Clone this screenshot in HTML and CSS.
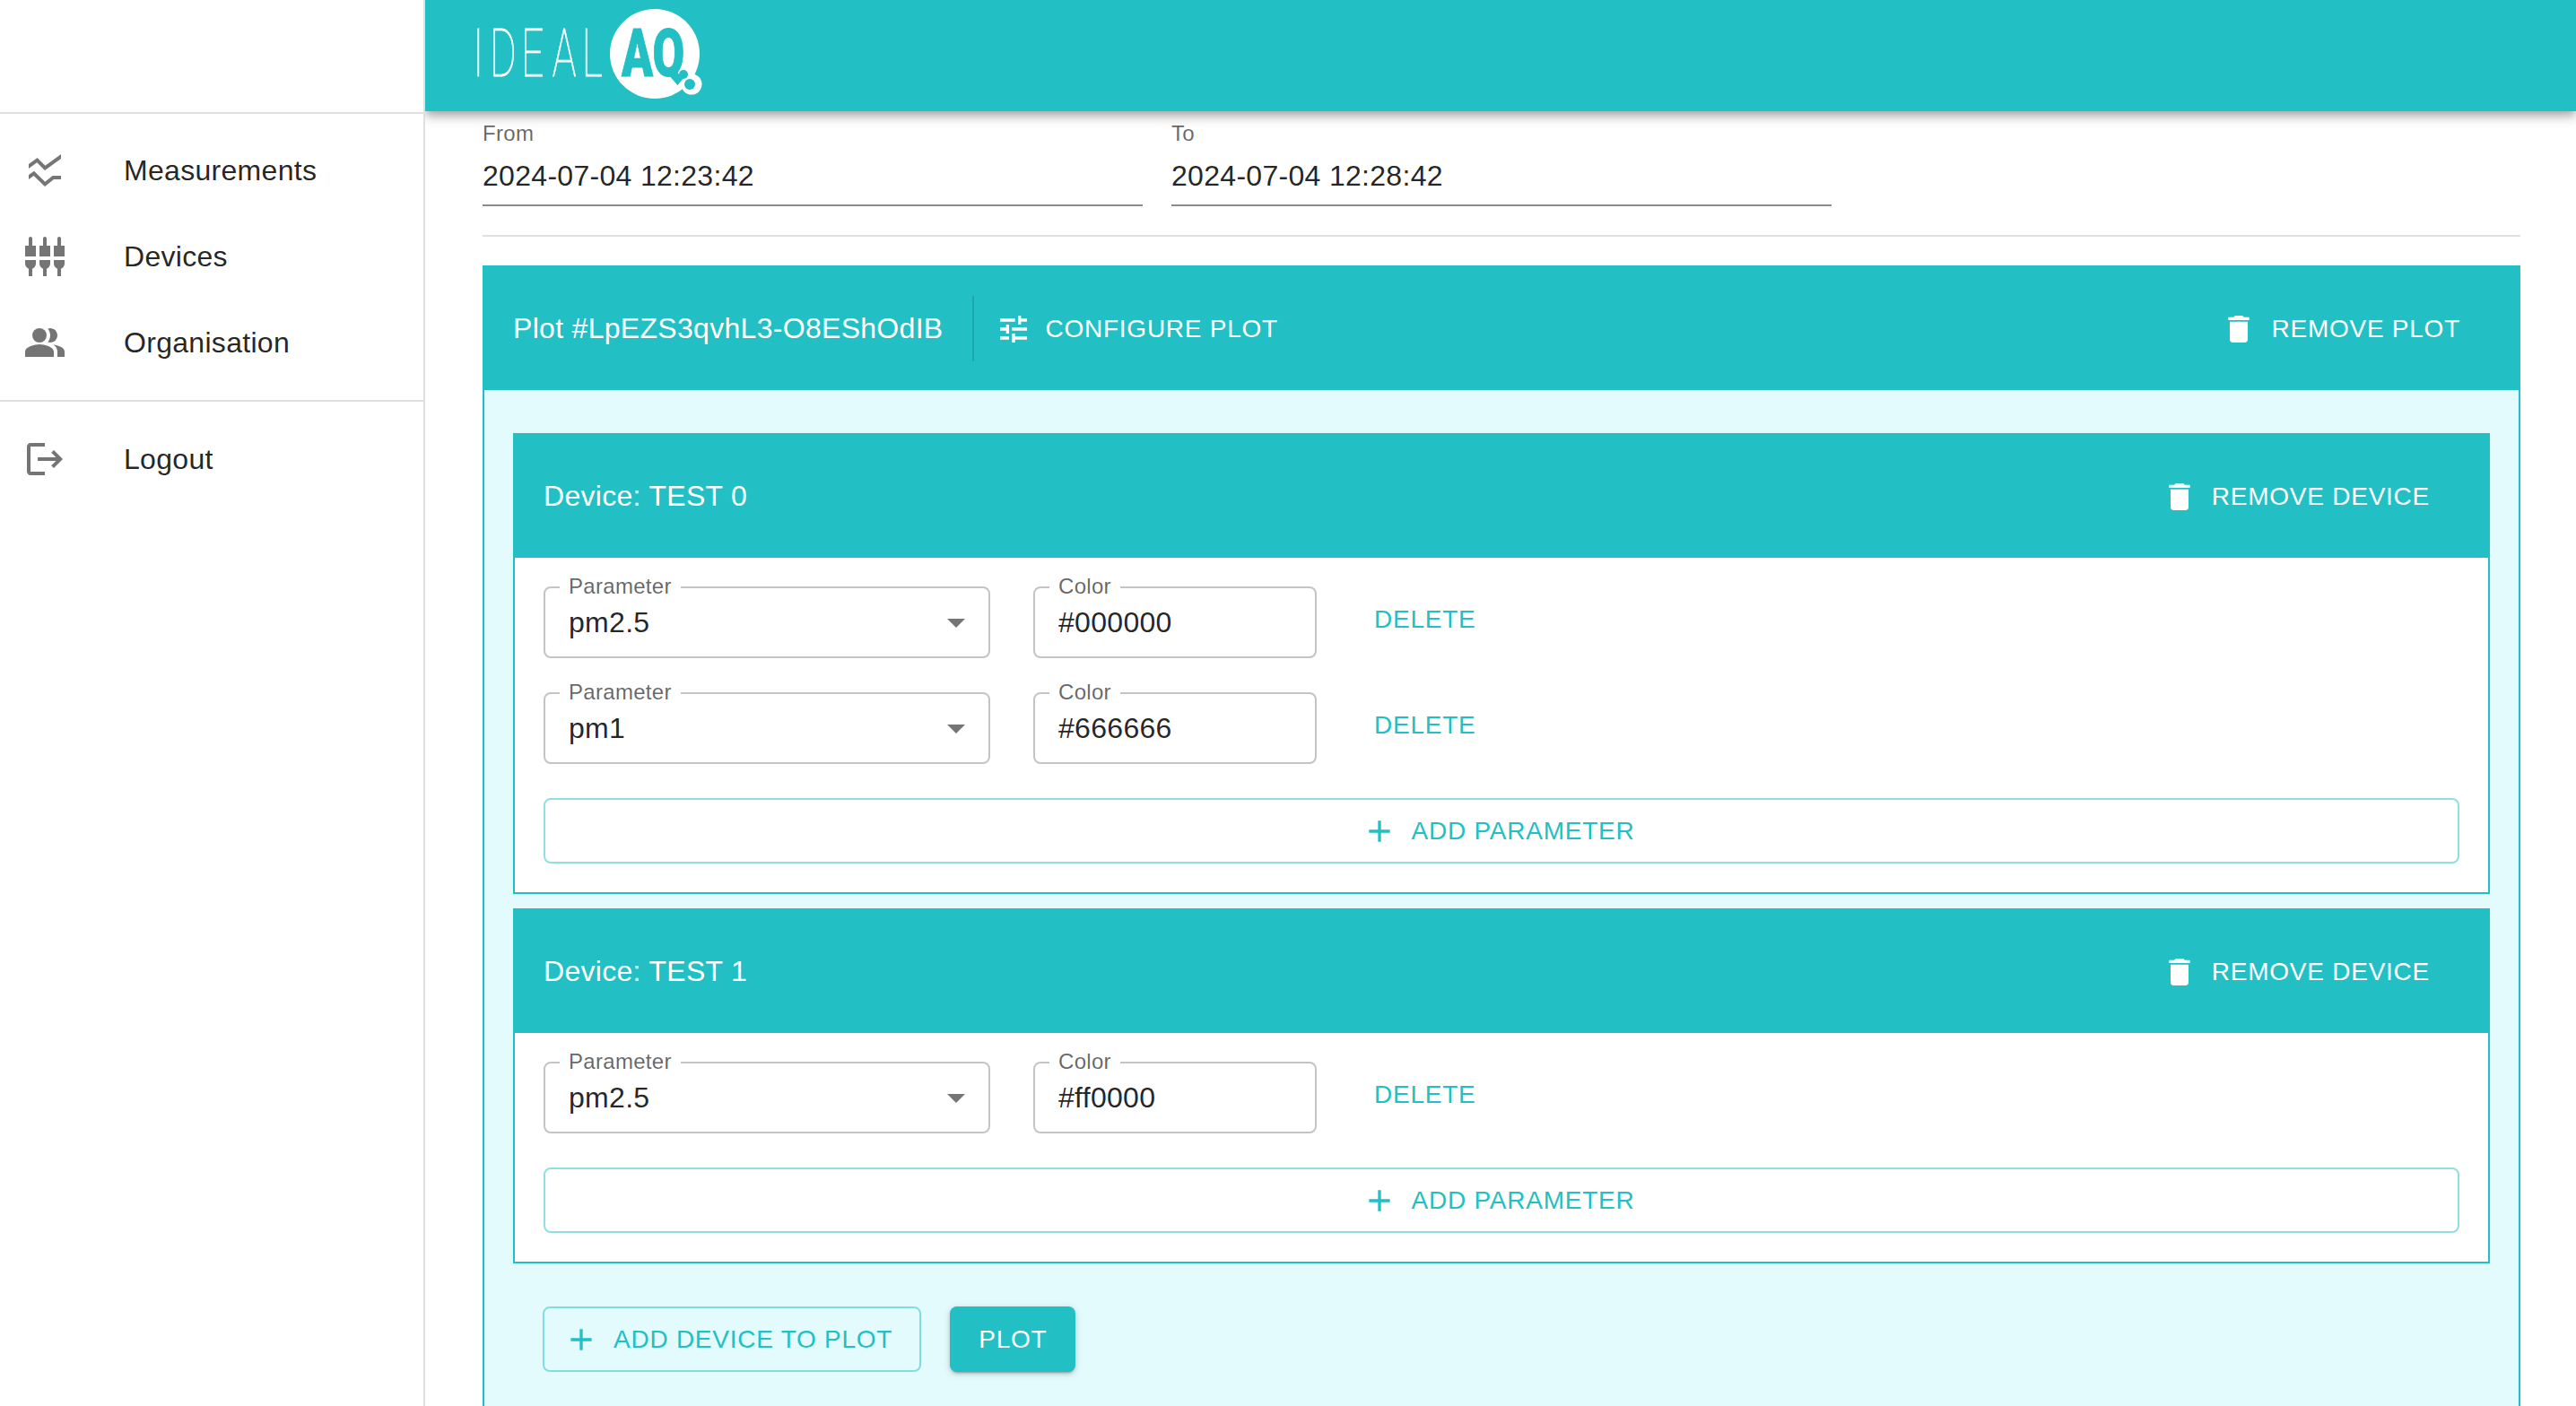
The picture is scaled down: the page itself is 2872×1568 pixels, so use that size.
FILE: index.html
```html
<!DOCTYPE html>
<html>
<head>
  <title>IdealAQ Measurements</title>
  <link rel="stylesheet" href="styles.css">
</head>
<body>
  <div class="app">
    <nav class="sidebar">
      <div class="sidebar-top"></div>
      <ul class="nav-list">
        <li class="nav-item">
          <svg class="nav-icon" viewBox="0 0 24 24"><path d="M21 5.47 12 12 7.62 7.62 3 11V8.52L7.83 5l4.38 4.38L21 3v2.47zM21 15h-4.7l-4.17 3.34L6 12.41l-3 2.13v2.46l2.8-2 6.2 6 5-4h4v-2z"/></svg>
          <span>Measurements</span>
        </li>
        <li class="nav-item">
          <svg class="nav-icon" viewBox="0 0 24 24"><path d="M5 2c0-.55-.45-1-1-1s-1 .45-1 1v4H1v6h6V6H5V2zm4 14c0 1.3.84 2.4 2 2.82V23h2v-4.18c1.16-.41 2-1.51 2-2.82v-2H9v2zm-8 0c0 1.3.84 2.4 2 2.82V23h2v-4.18C6.16 18.4 7 17.3 7 16v-2H1v2zM21 6V2c0-.55-.45-1-1-1s-1 .45-1 1v4h-2v6h6V6h-2zm-8-4c0-.55-.45-1-1-1s-1 .45-1 1v4H9v6h6V6h-2V2zm4 14c0 1.3.84 2.4 2 2.82V23h2v-4.18c1.16-.41 2-1.51 2-2.82v-2h-6v2z"/></svg>
          <span>Devices</span>
        </li>
        <li class="nav-item">
          <svg class="nav-icon" viewBox="0 0 24 24"><path d="M16.67 13.13C18.04 14.06 19 15.32 19 17v3h4v-3c0-2.18-3.57-3.47-6.33-3.87z"/><circle cx="9" cy="8" r="4"/><path d="M15 12c2.21 0 4-1.79 4-4s-1.79-4-4-4c-.47 0-.91.1-1.33.24C14.5 5.27 15 6.58 15 8s-.5 2.73-1.33 3.76c.42.14.86.24 1.33.24zM9 13c-2.67 0-8 1.34-8 4v3h16v-3c0-2.66-5.33-4-8-4z"/></svg>
          <span>Organisation</span>
        </li>
      </ul>
      <ul class="nav-list nav-list-last">
        <li class="nav-item">
          <svg class="nav-icon" viewBox="0 0 24 24"><path d="m17 7-1.41 1.41L18.17 11H8v2h10.17l-2.58 2.58L17 17l5-5zM4 5h8V3H4c-1.1 0-2 .9-2 2v14c0 1.1.9 2 2 2h8v-2H4V5z"/></svg>
          <span>Logout</span>
        </li>
      </ul>
    </nav>

    <div class="main">
      <header class="appbar">
        <svg class="logo" viewBox="0 0 180 124" width="180" height="124">
          <text class="logo-ideal" transform="scale(.6 1)" x="-4 27 85 143 198" y="85">IDEAL</text>
          <circle cx="200" cy="60" r="50" fill="#fff"/>
          <circle cx="241" cy="94" r="11.5" fill="#fff"/>
          <circle cx="239" cy="94" r="6" fill="#22bfc4"/>
          <text class="logo-aq" x="163" y="85" textLength="70" lengthAdjust="spacingAndGlyphs">AQ</text>
          <circle cx="232" cy="83" r="5" fill="#22bfc4"/>
        </svg>
      </header>

      <div class="content">
        <div class="range">
          <div class="range-field">
            <div class="range-label">From</div>
            <div class="range-value">2024-07-04 12:23:42</div>
          </div>
          <div class="range-field">
            <div class="range-label">To</div>
            <div class="range-value">2024-07-04 12:28:42</div>
          </div>
        </div>
        <div class="divider"></div>

        <section class="plot">
          <div class="bar">
            <span class="bar-title">Plot #LpEZS3qvhL3-O8EShOdIB</span>
            <span class="bar-sep"></span>
            <button class="btn btn-light btn-config">
              <svg class="btn-icon" viewBox="0 0 24 24"><path d="M3 17v2h6v-2H3zM3 5v2h10V5H3zm10 16v-2h8v-2h-8v-2h-2v6h2zM7 9v2H3v2h4v2h2V9H7zm14 4v-2H11v2h10zm-6-4h2V7h4V5h-4V3h-2v6z"/></svg>
              CONFIGURE PLOT
            </button>
            <button class="btn btn-light btn-remove">
              <svg class="btn-icon" viewBox="0 0 24 24"><path d="M6 19c0 1.1.9 2 2 2h8c1.1 0 2-.9 2-2V7H6v12zM19 4h-3.5l-1-1h-5l-1 1H5v2h14V4z"/></svg>
              REMOVE PLOT
            </button>
          </div>

          <div class="plot-body">
            <div class="device">
              <div class="bar">
                <span class="bar-title">Device: TEST 0</span>
                <button class="btn btn-light btn-remove">
                  <svg class="btn-icon" viewBox="0 0 24 24"><path d="M6 19c0 1.1.9 2 2 2h8c1.1 0 2-.9 2-2V7H6v12zM19 4h-3.5l-1-1h-5l-1 1H5v2h14V4z"/></svg>
                  REMOVE DEVICE
                </button>
              </div>
              <div class="device-body">
                <div class="param-row">
                  <div class="field field-param">
                    <label class="field-label">Parameter</label>
                    <span class="field-value">pm2.5</span>
                    <svg class="caret" viewBox="0 0 24 24"><path d="M7 10l5 5 5-5z"/></svg>
                  </div>
                  <div class="field field-color">
                    <label class="field-label">Color</label>
                    <span class="field-value">#000000</span>
                  </div>
                  <button class="btn btn-text">DELETE</button>
                </div>
                <div class="param-row">
                  <div class="field field-param">
                    <label class="field-label">Parameter</label>
                    <span class="field-value">pm1</span>
                    <svg class="caret" viewBox="0 0 24 24"><path d="M7 10l5 5 5-5z"/></svg>
                  </div>
                  <div class="field field-color">
                    <label class="field-label">Color</label>
                    <span class="field-value">#666666</span>
                  </div>
                  <button class="btn btn-text">DELETE</button>
                </div>
                <button class="btn btn-outlined btn-wide">
                  <svg class="btn-icon" viewBox="0 0 24 24"><path d="M19 13h-6v6h-2v-6H5v-2h6V5h2v6h6v2z"/></svg>
                  ADD PARAMETER
                </button>
              </div>
            </div>

            <div class="device">
              <div class="bar">
                <span class="bar-title">Device: TEST 1</span>
                <button class="btn btn-light btn-remove">
                  <svg class="btn-icon" viewBox="0 0 24 24"><path d="M6 19c0 1.1.9 2 2 2h8c1.1 0 2-.9 2-2V7H6v12zM19 4h-3.5l-1-1h-5l-1 1H5v2h14V4z"/></svg>
                  REMOVE DEVICE
                </button>
              </div>
              <div class="device-body">
                <div class="param-row">
                  <div class="field field-param">
                    <label class="field-label">Parameter</label>
                    <span class="field-value">pm2.5</span>
                    <svg class="caret" viewBox="0 0 24 24"><path d="M7 10l5 5 5-5z"/></svg>
                  </div>
                  <div class="field field-color">
                    <label class="field-label">Color</label>
                    <span class="field-value">#ff0000</span>
                  </div>
                  <button class="btn btn-text">DELETE</button>
                </div>
                <button class="btn btn-outlined btn-wide">
                  <svg class="btn-icon" viewBox="0 0 24 24"><path d="M19 13h-6v6h-2v-6H5v-2h6V5h2v6h6v2z"/></svg>
                  ADD PARAMETER
                </button>
              </div>
            </div>

            <div class="plot-actions">
              <button class="btn btn-outlined btn-add-device">
                <svg class="btn-icon" viewBox="0 0 24 24"><path d="M19 13h-6v6h-2v-6H5v-2h6V5h2v6h6v2z"/></svg>
                ADD DEVICE TO PLOT
              </button>
              <button class="btn btn-solid">PLOT</button>
            </div>
          </div>
        </section>
      </div>
    </div>
  </div>
</body>
</html>
```

FILE: styles.css
```css
* {
  box-sizing: border-box;
}

html, body {
  margin: 0;
  height: 100%;
  overflow: hidden;
  background: #fff;
  font-family: "Liberation Sans", Arial, sans-serif;
  color: rgba(0, 0, 0, 0.87);
}

.app {
  display: flex;
  height: 1568px;
  overflow: hidden;
}

/* sidebar */
.sidebar {
  width: 474px;
  flex: none;
  border-right: 2px solid #e0e0e0;
  background: #fff;
  position: relative;
  z-index: 2;
}

.sidebar-top {
  height: 127px;
  border-bottom: 2px solid #e0e0e0;
}

.nav-list {
  list-style: none;
  margin: 0;
  padding: 15px 0 16px;
  border-bottom: 2px solid #e0e0e0;
}

.nav-list-last {
  border-bottom: none;
  padding-top: 16px;
}

.nav-item {
  display: flex;
  align-items: center;
  height: 96px;
  padding-left: 26px;
  font-size: 32px;
  letter-spacing: 0.3px;
}

.nav-icon {
  width: 48px;
  height: 48px;
  margin-right: 64px;
  fill: #757575;
  flex: none;
}

/* top bar */
.main {
  flex: 1;
  min-width: 0;
}

.appbar {
  height: 124px;
  padding-left: 56px;
  background: #22bfc4;
  display: flex;
  position: relative;
  z-index: 1;
  box-shadow: 0 4px 8px -2px rgba(0, 0, 0, 0.2), 0 8px 10px rgba(0, 0, 0, 0.14), 0 2px 20px rgba(0, 0, 0, 0.12);
}

.logo {
  overflow: visible;
}

.logo-ideal {
  font-family: Roboto, sans-serif;
  font-weight: 100;
  font-size: 74.5px;
  fill: #fff;
  stroke: #fff;
  stroke-width: 0.8px;
}

.logo-aq {
  font-family: Roboto, sans-serif;
  font-weight: 900;
  font-size: 74.5px;
  fill: #22bfc4;
  stroke: #22bfc4;
  stroke-width: 1px;
}

/* page body */
.content {
  padding: 11px 62px 0 64px;
}

.range {
  display: flex;
  gap: 32px;
}

.range-field {
  width: 736px;
  border-bottom: 2px solid #8c8c8c;
  padding-bottom: 12px;
}

.range-label {
  font-size: 24px;
  line-height: 28px;
  letter-spacing: 0.3px;
  color: rgba(0, 0, 0, 0.6);
  margin-bottom: 13px;
}

.range-value {
  font-size: 32px;
  line-height: 40px;
  letter-spacing: 0.3px;
}

.divider {
  height: 2px;
  background: #e0e0e0;
  margin: 32px 0;
}

/* plot panel */
.plot {
  border: 2px solid #22bfc4;
  background: #e3fbfd;
}

.bar {
  height: 137px;
  margin: 0;
  padding: 0 32px;
  background: #22bfc4;
  color: #fff;
  display: flex;
  align-items: center;
}

.bar-title {
  font-size: 32px;
  letter-spacing: 0.3px;
}

.bar-sep {
  width: 2px;
  height: 73px;
  margin: 0 16px 0 32px;
  background: rgba(0, 0, 0, 0.12);
}

.plot-body {
  padding: 48px 32px;
}

.device {
  border: 2px solid #22bfc4;
  background: #fff;
  margin-bottom: 16px;
}

.device-body {
  padding: 32px;
}

.param-row {
  display: flex;
  align-items: flex-start;
  margin-bottom: 38px;
}

/* outlined inputs */
.field {
  height: 80px;
  border: 2px solid #c4c4c4;
  border-radius: 8px;
  padding: 0 26px;
  display: flex;
  align-items: center;
  justify-content: space-between;
  position: relative;
  flex: none;
}

.field-param {
  width: 498px;
  margin-right: 48px;
}

.field-color {
  width: 316px;
  margin-right: 32px;
}

.field-label {
  position: absolute;
  left: 16px;
  top: -16px;
  padding: 0 10px;
  background: #fff;
  font-size: 24px;
  line-height: 28px;
  letter-spacing: 0.3px;
  color: rgba(0, 0, 0, 0.6);
}

.field-value {
  font-size: 32px;
  letter-spacing: 0.3px;
}

.caret {
  width: 48px;
  height: 48px;
  margin-right: -14px;
  fill: #757575;
}

/* buttons */
.btn {
  display: inline-flex;
  align-items: center;
  justify-content: center;
  height: 73px;
  padding: 0 32px;
  border: none;
  border-radius: 8px;
  background: none;
  font-family: inherit;
  font-size: 28px;
  letter-spacing: 0.75px;
  cursor: pointer;
  flex: none;
}

.btn-icon {
  width: 40px;
  height: 40px;
  margin-right: 16px;
  margin-left: -8px;
  fill: currentColor;
}

.btn-light {
  color: #fff;
}

.btn-config {
  padding-left: 16px;
}

.btn-remove {
  margin-left: auto;
  padding-right: 33px;
}

.btn-text {
  color: #22bfc4;
}

.btn-outlined {
  color: #22bfc4;
  border: 2px solid rgba(34, 191, 196, 0.5);
}

.btn-outlined .btn-icon {
  fill: #22bfc4;
}

.btn-wide {
  width: 100%;
  display: flex;
}

.btn-add-device {
  padding: 0 30px 0 29px;
}

.btn-solid {
  background: #22bfc4;
  color: #fff;
  box-shadow: 0 3px 2px -2px rgba(0, 0, 0, 0.2), 0 2px 4px rgba(0, 0, 0, 0.14), 0 2px 10px rgba(0, 0, 0, 0.12);
}

.plot-actions {
  display: flex;
  gap: 32px;
  margin-top: 48px;
  margin-left: 33px;
}
```
